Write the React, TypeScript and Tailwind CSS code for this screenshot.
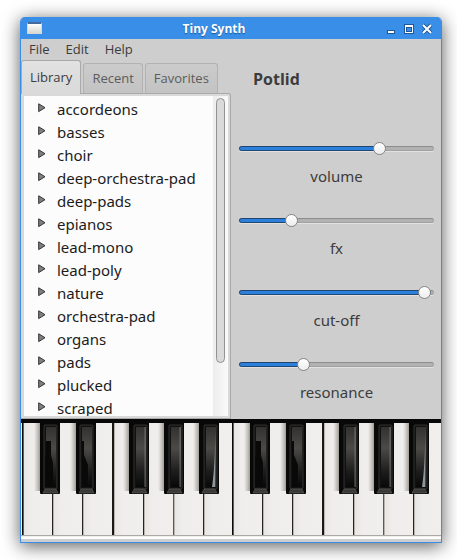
import { useState } from "react";

const menus = ["File", "Edit", "Help"];
const tabs = ["Library", "Recent", "Favorites"];
const groups = [
  "accordeons",
  "basses",
  "choir",
  "deep-orchestra-pad",
  "deep-pads",
  "epianos",
  "lead-mono",
  "lead-poly",
  "nature",
  "orchestra-pad",
  "organs",
  "pads",
  "plucked",
  "scraped",
];
const knobs = [
  { name: "volume", value: 736 },
  { name: "fx", value: 253 },
  { name: "cut-off", value: 984 },
  { name: "resonance", value: 319 },
];

function TitleBar() {
  return (
    <header className="flex h-[22px] items-center bg-[#398ee7] pr-[9px] pl-[6px]">
      <div className="h-3 w-[15px] border border-t-2 border-[#d8d8d0] border-t-[#456a9c] bg-linear-to-b from-white to-[#d9d9d2]" />
      <h1 className="flex-1 pt-[2px] text-center text-[12px] leading-5 font-bold text-white [text-shadow:0_1px_1px_#1c5a9f]">
        Tiny Synth
      </h1>
      <div className="flex items-center gap-2">
        <button aria-label="Minimize" className="h-[11px] w-[10px]">
          <svg viewBox="0 0 10 11" className="h-[11px] w-[10px]" shapeRendering="crispEdges">
            <rect x="1" y="7" width="8" height="4" fill="#1d5799" />
            <rect x="2" y="8" width="6" height="2" fill="#fff" />
          </svg>
        </button>
        <button aria-label="Maximize" className="h-[11px] w-[10px]">
          <svg viewBox="0 0 10 11" className="h-[11px] w-[10px]" shapeRendering="crispEdges">
            <rect x="0" y="1" width="10" height="10" fill="#1d5799" />
            <rect x="1" y="2" width="8" height="8" fill="#fff" />
            <rect x="2" y="4" width="6" height="5" fill="#1d5799" />
            <rect x="3" y="5" width="4" height="3" fill="#398ee7" />
          </svg>
        </button>
        <button aria-label="Close" className="h-[11px] w-[10px]">
          <svg viewBox="0 0 10 11" className="h-[11px] w-[10px]">
            <path d="M1 2 9 10M9 2 1 10" stroke="#1d5799" strokeWidth="4" />
            <path d="M1 2 9 10M9 2 1 10" stroke="#fff" strokeWidth="2" />
          </svg>
        </button>
      </div>
    </header>
  );
}

function Library() {
  return (
    <section className="w-[210px] shrink-0">
      <div role="tablist" className="flex h-[33px] items-end gap-[2px] text-[13px]">
        {tabs.map((tab, i) => (
          <button
            key={tab}
            role="tab"
            aria-selected={i === 0}
            className={
              i === 0
                ? "relative z-10 -mb-px h-[34px] rounded-t-[3px] border border-b-0 border-[#a9a9a9] bg-linear-to-b from-[#e2e2e2] to-[#d9d9d9] px-2 text-[#3c3c3c]"
                : "h-[30px] rounded-t-[3px] border border-b-0 border-[#b2b2b2] bg-linear-to-b from-[#cbcbcb] to-[#c3c3c3] px-2 text-[#5c5c5c]"
            }
          >
            {tab}
          </button>
        ))}
      </div>
      <div className="rounded-tr-[3px] border border-l-0 border-[#a9a9a9] bg-[#d9d9d9] py-[2px] pr-[2px] pl-[3px]">
        <div className="flex h-80 overflow-hidden bg-[#fcfcfc]">
          <ul className="min-w-0 flex-1 pt-[2px] font-['Noto_Sans','Open_Sans',sans-serif] text-[15px] text-[#1b1b1b]">
            {groups.map((g) => (
              <li key={g}>
                <button className="flex h-[23px] w-full items-center gap-[10px] pl-[14px] text-left leading-[23px]">
                  <svg viewBox="0 0 9 13" className="h-[13px] w-[9px] shrink-0">
                    <path d="M.7 .8 7 4.7 .7 8.6Z" fill="#808080" stroke="#333" />
                  </svg>
                  {g}
                </button>
              </li>
            ))}
          </ul>
          <div className="w-[15px] bg-linear-to-r from-[#ececec] to-[#fafafa] px-[3px] pt-[2px]">
            <div className="h-[265px] rounded-full border border-[#929292] bg-[#dadada]" />
          </div>
        </div>
      </div>
    </section>
  );
}

function Fader({ name, initial }: { name: string; initial: number }) {
  const [value, setValue] = useState(initial);
  return (
    <div className="flex flex-col">
      <div className="relative flex h-[13px] items-center">
        <div className="h-[5px] w-full overflow-hidden rounded-full border border-t-[#8d8d8d] border-r-[#a0a0a0] border-b-[#a2a2a2] border-l-[#8d8d8d] bg-[#b2b2b2] shadow-[0_1px_0_#e2e2e2]" />
        <div
          className="absolute left-0 h-[5px] rounded-full border border-[#23466e] bg-[#2a80dc]"
          style={{ width: `${value / 10}%` }}
        />
        <input
          id={name}
          type="range"
          min={0}
          max={1000}
          value={value}
          onChange={(e) => setValue(Number(e.target.value))}
          className="absolute inset-0 m-0 h-[13px] w-full appearance-none bg-transparent [&::-webkit-slider-thumb]:size-[13px] [&::-webkit-slider-thumb]:appearance-none [&::-webkit-slider-thumb]:rounded-full [&::-webkit-slider-thumb]:border [&::-webkit-slider-thumb]:border-[#858585] [&::-webkit-slider-thumb]:bg-linear-to-b [&::-webkit-slider-thumb]:from-white [&::-webkit-slider-thumb]:to-[#ededed]"
        />
      </div>
      <label
        htmlFor={name}
        className="mt-[9px] text-center font-['Noto_Sans','Open_Sans',sans-serif] text-[15px] leading-6 text-[#3c3c3c]"
      >
        {name}
      </label>
    </div>
  );
}

function Octave({ x }: { x: number }) {
  return (
    <g transform={`translate(${x} 0)`}>
      {[0, 30, 60, 91, 121, 151, 181].map((k) => (
        <g key={k}>
          <rect x={k + 1} y="4" width="29" height="112" fill="url(#ivory)" />
          <rect x={k} y="4" width="1" height="112" fill={k === 151 ? "#5d5851" : "#26231f"} />
          <rect x={k + 1} y="4" width="1" height="112" fill="#b8b4ad" />
        </g>
      ))}
      <rect x="0" y="4" width="1.5" height="112" fill="#090909" />
      <rect x="90" y="4" width="2" height="112" fill="#1a1817" />
      {[18, 54, 107, 142, 177].map((k, i) => (
        <g key={k} transform={`translate(${k} 0)`}>
          <rect x="-6" y="4" width="7" height="68" fill="url(#cast)" />
          <rect y="3" width="20" height="72" rx="1" fill="#080808" />
          <rect x={i < 2 ? 4 : 5} y="6" width="13" height="64" rx="1" fill="#111" stroke="#3d3c3b" strokeWidth="0.8" />
          <rect x={i < 2 ? 6 : 7} y="8" width="10" height="60" fill="url(#ebony)" />
          {i < 2 ? (
            <path d={i === 0 ? "M6 22h5v14l2 8v24H5V40l1-4Z" : "M6 22h2v14l4 10v22H6Z"} fill="#090909" />
          ) : (
            <path
              d={i === 4 ? "M16.4 8V68H13Q16.2 46 16.4 8Z" : "M16.6 8V68H15.6V8Z"}
              fill={i === 4 ? "#8f979b" : "#777"}
            />
          )}
          <path d="M3 74 5 70H16L18 74Z" fill="#393938" stroke="#5c5b59" strokeWidth="0.6" />
        </g>
      ))}
    </g>
  );
}

function Keyboard() {
  return (
    <svg
      role="img"
      aria-label="Piano keyboard"
      viewBox="0 0 420 118"
      preserveAspectRatio="none"
      className="block h-[118px] w-full"
    >
      <defs>
        <linearGradient id="ivory" x1="0" y1="0" x2="1" y2="0">
          <stop offset="0" stopColor="#e8e6e4" />
          <stop offset="0.3" stopColor="#efeeec" />
          <stop offset="1" stopColor="#f0efee" />
        </linearGradient>
        <linearGradient id="cast" x1="0" y1="0" x2="1" y2="0">
          <stop offset="0" stopColor="#aaa59e" stopOpacity="0" />
          <stop offset="1" stopColor="#8f8a82" />
        </linearGradient>
        <linearGradient id="ebony" x1="0" y1="0" x2="0" y2="1">
          <stop offset="0" stopColor="#32312f" />
          <stop offset="0.35" stopColor="#4c4a47" />
          <stop offset="0.75" stopColor="#1c1c1c" />
          <stop offset="1" stopColor="#080808" />
        </linearGradient>
      </defs>
      <rect width="420" height="118" fill="#f0efee" />
      <Octave x={1} />
      <Octave x={211} />
      <rect width="420" height="4" fill="#080808" />
      <rect y="116" width="420" height="1" fill="#aaa9a4" />
    </svg>
  );
}

export default function App() {
  return (
    <div className="bg-white pt-[17px] pr-[15px] pb-[17px] pl-5 font-['Open_Sans','Noto_Sans',sans-serif]">
      <main className="overflow-hidden rounded-t-[5px] border border-t-0 border-[#398ee7] bg-[#cecece] shadow-[0_3px_18px_rgba(0,0,0,0.65)]">
        <TitleBar />
        <nav className="flex h-[21px] items-center gap-4 px-2 text-[13px] text-[#3c3c3c]">
          {menus.map((m) => (
            <button key={m}>{m}</button>
          ))}
        </nav>
        <div className="flex">
          <Library />
          <section className="flex min-w-0 flex-1 flex-col gap-[26px] pr-[7px] pl-2">
            <h2 className="h-14 pt-[7px] pl-[14px] text-[16px] leading-6 font-bold text-[#3c3c3c]">Potlid</h2>
            {knobs.map((k) => (
              <Fader key={k.name} name={k.name} initial={k.value} />
            ))}
          </section>
        </div>
        <Keyboard />
        <div className="h-[2px] bg-white" />
        <div className="h-[3px] bg-[#cecece]" />
      </main>
    </div>
  );
}
